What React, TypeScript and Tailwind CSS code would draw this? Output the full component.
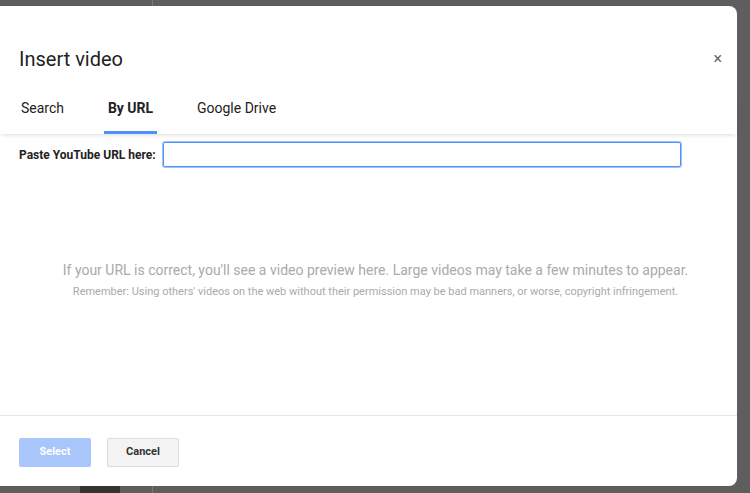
export default function App() {
  return (
    <div className="relative h-[493px] w-[750px] overflow-hidden bg-[#5e5e5e] font-[Roboto,Arial,sans-serif]">
      <div className="absolute left-[152px] top-0 h-full w-px bg-[#777]" />
      <div className="absolute left-[80px] top-[486px] h-[7px] w-[40px] bg-[#333]" />
      <div className="absolute left-0 top-[6px] flex h-[480px] w-[737px] flex-col rounded-r-[8px] bg-white">
        <div className="flex items-center justify-between pl-[19px] pr-[15px] pt-[41px]">
          <h1 className="text-[20px] leading-[24px] text-[#222]">Insert video</h1>
          <span className="text-[16px] leading-[24px] text-[#666]">×</span>
        </div>
        <div className="mt-[27px] flex h-[36px] items-stretch pl-[21px] text-[14px] text-[#222] shadow-[0_3px_4px_-2px_rgba(0,0,0,0.15)]">
          <div className="w-[83px]">Search</div>
          <div className="flex w-[53px] justify-center border-b-[3px] border-[#4d90fe] font-bold">By URL</div>
          <div className="ml-[40px]">Google Drive</div>
        </div>
        <div className="mt-[8px] flex items-center pl-[19px]">
          <span className="text-[12px] font-bold text-[#222]">Paste YouTube URL here:</span>
          <div className="ml-[7px] h-[25px] w-[518px] rounded-[2px] border border-[#4d90fe] shadow-[0_0_0_1px_#a6c1f5]" />
        </div>
        <div className="mt-[93px] flex flex-col items-center pl-[14px] text-center text-[#aaa]">
          <p className="text-[14px] leading-[20px]">If your URL is correct, you'll see a video preview here. Large videos may take a few minutes to appear.</p>
          <p className="mt-[5px] text-[11px] leading-[14px]">Remember: Using others' videos on the web without their permission may be bad manners, or worse, copyright infringement.</p>
        </div>
        <div className="mt-auto flex h-[71px] items-center gap-[16px] border-t border-[#e5e5e5] pl-[19px] pt-[2px]">
          <button className="h-[29px] w-[72px] rounded-[2px] bg-[#a9c6fb] text-[11px] font-bold text-white">Select</button>
          <button className="h-[29px] w-[72px] rounded-[2px] border border-[#dcdcdc] bg-[#f3f3f3] text-[11px] font-bold text-[#333]">Cancel</button>
        </div>
      </div>
    </div>
  );
}
